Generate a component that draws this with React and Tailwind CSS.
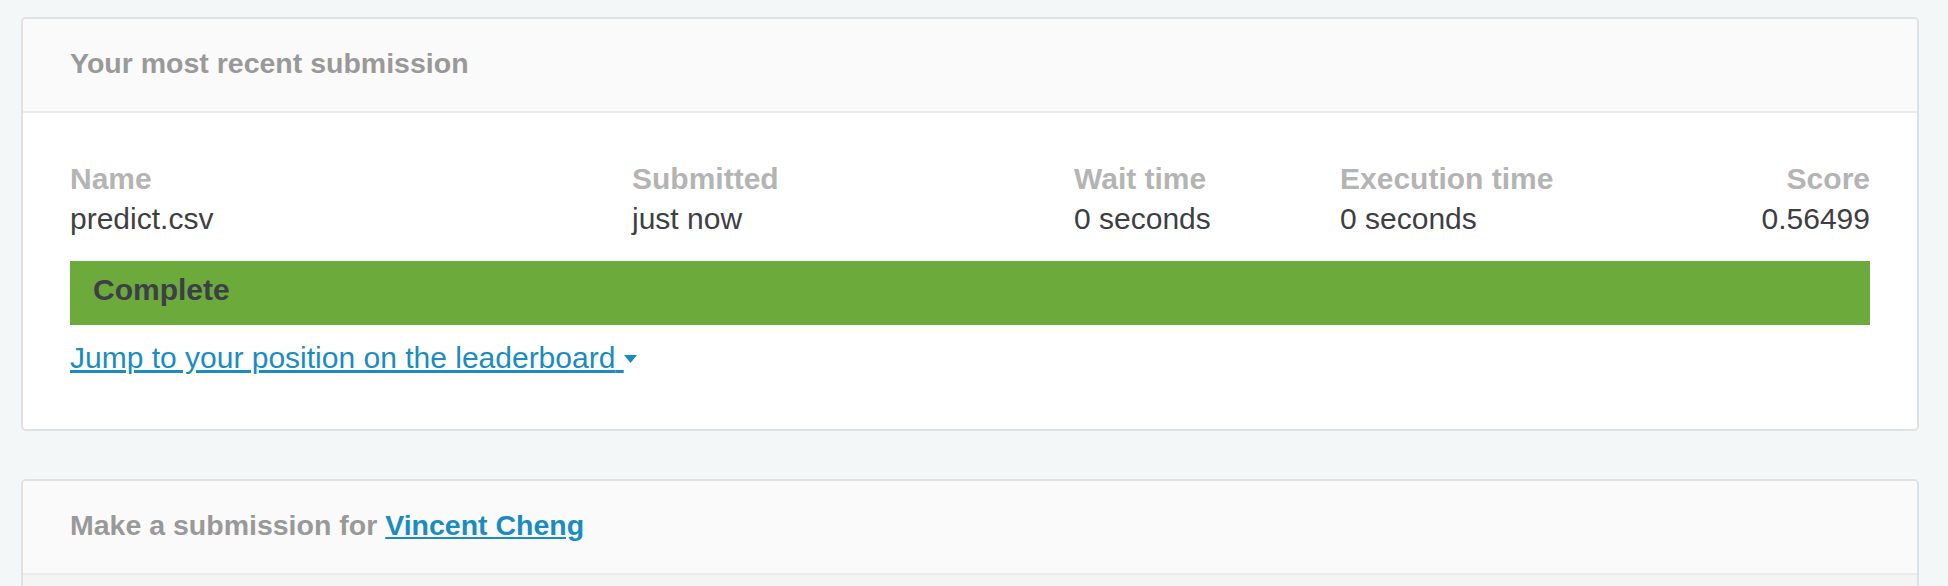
export default function App() {
  const font = { fontFamily: '"Liberation Sans", Arial, sans-serif' };
  return (
    <div
      className="h-[586px] overflow-hidden bg-[#f4f7f8] pt-[17px] pl-[21px] pr-[29px]"
      style={font}
    >
      {/* Card 1 */}
      <div className="rounded-[5px] border-2 border-[#dfe2e4] bg-white overflow-hidden">
        <div className="bg-[#fafafa] border-b-2 border-[#ebebeb] px-[47px] pt-[28px] pb-[32px]">
          <h2 className="text-[28.5px] leading-[32px] font-bold text-[#999999]">
            Your most recent submission
          </h2>
        </div>
        <div className="px-[47px] pt-[46px] pb-[51px]">
          <div className="grid grid-cols-[562px_442px_266px_1fr_auto] text-[30px] leading-[40px]">
            <div className="font-bold text-[#b4b4b4]">Name</div>
            <div className="font-bold text-[#b4b4b4]">Submitted</div>
            <div className="font-bold text-[#b4b4b4]">Wait time</div>
            <div className="font-bold text-[#b4b4b4]">Execution time</div>
            <div className="font-bold text-[#b4b4b4] text-right">Score</div>
            <div className="text-[#3e3e44]">predict.csv</div>
            <div className="text-[#3e3e44]">just now</div>
            <div className="text-[#3e3e44]">0 seconds</div>
            <div className="text-[#3e3e44]">0 seconds</div>
            <div className="text-[#3e3e44] text-right">0.56499</div>
          </div>
          <div className="mt-[22px] h-[64px] bg-[#6caa3c] pl-[23px] pt-[9px]">
            <span className="text-[30px] leading-[40px] font-bold text-[#3c3f47]">
              Complete
            </span>
          </div>
          <div className="mt-[13px] text-[30px] leading-[40px]">
            <a href="#" className="text-[#1a8cc0] underline">
              Jump to your position on the leaderboard{" "}
              <svg
                width="13"
                height="8"
                viewBox="0 0 13 8"
                className="inline-block align-[5px]"
              >
                <polygon points="0,0 13,0 6.5,8" fill="#1a8cc0" />
              </svg>
            </a>
          </div>
        </div>
      </div>

      {/* Card 2 */}
      <div className="mt-[48px] rounded-[5px] border-2 border-[#dfe2e4] bg-white overflow-hidden">
        <div className="bg-[#fafafa] border-b-2 border-[#ebebeb] px-[47px] pt-[28px] pb-[32px]">
          <h2 className="text-[28.5px] leading-[32px] font-bold text-[#999999]">
            Make a submission for{" "}
            <a href="#" className="text-[#1a8cc0] underline">
              Vincent Cheng
            </a>
          </h2>
        </div>
        <div className="h-[200px] bg-[#f4f4f4]" />
      </div>
    </div>
  );
}
